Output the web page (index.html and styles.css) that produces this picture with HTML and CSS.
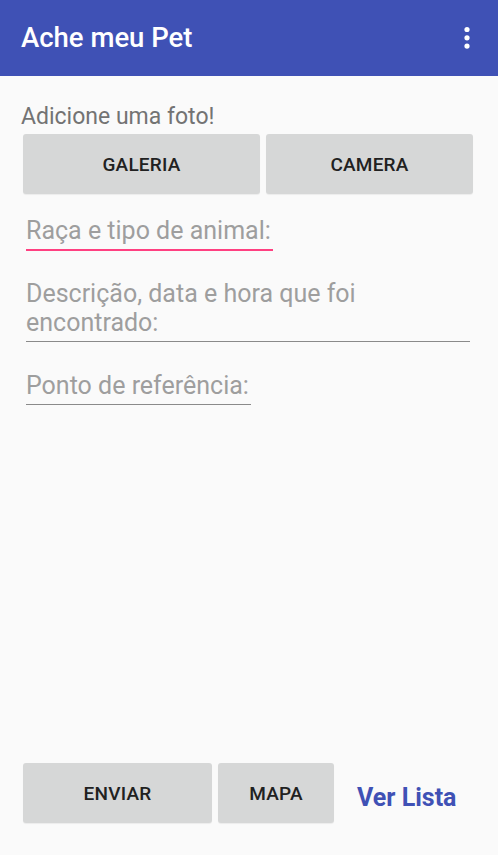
FILE: index.html
```html
<!DOCTYPE html>
<html lang="pt">
<head>
  <meta charset="UTF-8" />
  <meta name="viewport" content="width=device-width, initial-scale=1.0"/>
  <title>Ache meu Pet</title>
  <link rel="stylesheet" href="styles.css">
</head>
<body>

  <!-- Toolbar -->
  <header class="toolbar">
    <h1>Ache meu Pet</h1>
    <svg class="menu-icon" width="6" height="24" viewBox="0 0 6 24">
      <circle cx="3" cy="3.5" r="2.6" fill="#fff"/>
      <circle cx="3" cy="11.8" r="2.6" fill="#fff"/>
      <circle cx="3" cy="20.1" r="2.6" fill="#fff"/>
    </svg>
  </header>

  <!-- Formulario -->
  <main class="content">
    <p class="photo-label">Adicione uma foto!</p>
    <div class="photo-buttons">
      <button class="btn btn-galeria">GALERIA</button>
      <button class="btn btn-camera">CAMERA</button>
    </div>

    <div class="field field-focus field-raca">
      <span class="hint">Raça e tipo de animal:</span>
    </div>
    <div class="field field-desc">
      <span class="hint">Descrição, data e hora que foi<br>encontrado:</span>
    </div>
    <div class="field field-ponto">
      <span class="hint">Ponto de referência:</span>
    </div>
  </main>

  <!-- Rodape -->
  <footer class="bottom-bar">
    <button class="btn btn-enviar">ENVIAR</button>
    <button class="btn btn-mapa">MAPA</button>
    <a class="link-lista" href="#">Ver Lista</a>
  </footer>

</body>
</html>
```

FILE: styles.css
```css
body {
  font-family: Roboto, 'Noto Sans', sans-serif;
  margin: 0;
  height: 855px;
  display: flex;
  flex-direction: column;
  background-color: #fafafa;
}

.toolbar {
  height: 76px;
  background-color: #3f51b5;
  display: flex;
  align-items: center;
  justify-content: space-between;
  padding: 0 28px 0 21px;
  box-sizing: border-box;
}

.toolbar h1 {
  margin: 0;
  color: #fff;
  font-size: 27.5px;
  font-weight: 500;
  padding-bottom: 1px;
}

.menu-icon {
  display: block;
}

.content {
  flex: 1;
  padding: 0 25px 0 21px;
}

.photo-label {
  margin: 27px 0 0;
  font-size: 23px;
  line-height: 27px;
  color: #737373;
}

.photo-buttons {
  display: flex;
  gap: 6px;
  margin: 4px 0 0 2px;
}

.btn {
  font-family: Roboto, sans-serif;
  height: 60px;
  border: none;
  border-radius: 3px;
  background-color: #d6d7d7;
  color: #212121;
  font-size: 19px;
  font-weight: 500;
  letter-spacing: 0.2px;
  box-shadow: 0 1px 1px rgba(0, 0, 0, 0.06);
}

.btn-galeria {
  width: 237px;
}

.btn-camera {
  width: 207px;
}

.field {
  margin-left: 5px;
  border-bottom: 1px solid #8a8a8a;
}

.hint {
  display: block;
  font-size: 25px;
  line-height: 29px;
  color: #9e9e9e;
  padding-bottom: 4px;
}

.field-focus {
  border-bottom: 2px solid #ff4081;
}

.field-raca {
  width: 247px;
  margin-top: 22px;
}

.field-desc {
  width: 444px;
  margin-top: 28px;
}

.field-ponto {
  width: 225px;
  margin-top: 29px;
}

.bottom-bar {
  display: flex;
  align-items: center;
  gap: 6px;
  padding: 0 0 32px 23px;
}

.btn-enviar {
  width: 189px;
}

.btn-mapa {
  width: 116px;
}

.link-lista {
  margin-left: 17px;
  padding-top: 8px;
  color: #3f51b5;
  font-size: 25px;
  font-weight: 700;
  text-decoration: none;
}
```
